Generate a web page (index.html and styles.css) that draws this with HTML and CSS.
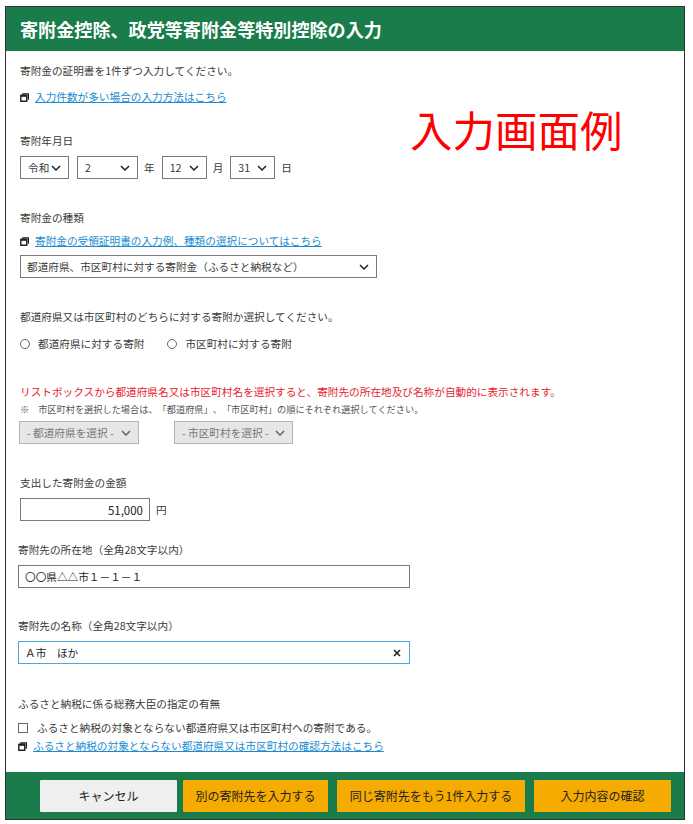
FILE: index.html
```html
<!DOCTYPE html>
<html lang="ja">
<head>
  <meta charset="UTF-8">
  <title>寄附金控除、政党等寄附金等特別控除の入力</title>
  <link rel="stylesheet" href="styles.css">
</head>
<body>
  <div class="frame">
    <header class="title-bar">
      <h1>寄附金控除、政党等寄附金等特別控除の入力</h1>
    </header>

    <main class="content">
      <p class="example-note">入力画面例</p>

      <p class="intro">寄附金の証明書を1件ずつ入力してください。</p>
      <p class="link-row link-first">
        <svg class="win-icon" viewBox="0 0 10 10"><path d="M2.5 1h7v6.5M.9 2.8h6.6v6.3H.9z" fill="none" stroke="#222" stroke-width="1.6"/><path d="M.9 3h6.6" stroke="#222" stroke-width="2.4"/></svg>
        <a href="#">入力件数が多い場合の入力方法はこちら</a>
      </p>

      <!-- 寄附年月日 -->
      <section class="date-block">
        <label class="field-label">寄附年月日</label>
        <div class="date-row">
          <span class="select w-era">令和<svg class="chev" viewBox="0 0 10 6"><path d="M1 1l4 4 4-4"/></svg></span>
          <span class="select w-year">2<svg class="chev" viewBox="0 0 10 6"><path d="M1 1l4 4 4-4"/></svg></span>
          <span class="unit">年</span>
          <span class="select w-day">12<svg class="chev" viewBox="0 0 10 6"><path d="M1 1l4 4 4-4"/></svg></span>
          <span class="unit">月</span>
          <span class="select w-day">31<svg class="chev" viewBox="0 0 10 6"><path d="M1 1l4 4 4-4"/></svg></span>
          <span class="unit">日</span>
        </div>
      </section>

      <!-- 寄附金の種類 -->
      <section class="kind-block">
        <label class="field-label">寄附金の種類</label>
        <p class="link-row link-kind">
          <svg class="win-icon" viewBox="0 0 10 10"><path d="M2.5 1h7v6.5M.9 2.8h6.6v6.3H.9z" fill="none" stroke="#222" stroke-width="1.6"/><path d="M.9 3h6.6" stroke="#222" stroke-width="2.4"/></svg>
          <a href="#">寄附金の受領証明書の入力例、種類の選択についてはこちら</a>
        </p>
        <span class="select w-kind">都道府県、市区町村に対する寄附金（ふるさと納税など）<svg class="chev" viewBox="0 0 10 6"><path d="M1 1l4 4 4-4"/></svg></span>
      </section>

      <section class="target-block">
        <p class="field-label">都道府県又は市区町村のどちらに対する寄附か選択してください。</p>
        <div class="radio-row">
          <span class="radio"></span><span class="radio-text">都道府県に対する寄附</span>
          <span class="radio"></span><span>市区町村に対する寄附</span>
        </div>
      </section>

      <section class="list-block">
        <p class="warn">リストボックスから都道府県名又は市区町村名を選択すると、寄附先の所在地及び名称が自動的に表示されます。</p>
        <p class="small-note"><span class="kome">※</span>市区町村を選択した場合は、「都道府県」、「市区町村」の順にそれぞれ選択してください。</p>
        <div class="disabled-row">
          <span class="select is-disabled w-pref">- 都道府県を選択 -<svg class="chev" viewBox="0 0 10 6"><path d="M1 1l4 4 4-4"/></svg></span>
          <span class="select is-disabled w-city">- 市区町村を選択 -<svg class="chev" viewBox="0 0 10 6"><path d="M1 1l4 4 4-4"/></svg></span>
        </div>
      </section>

      <section class="amount-block">
        <label class="field-label">支出した寄附金の金額</label>
        <div class="amount-row">
          <span class="text-input amount">51,000</span>
          <span class="unit">円</span>
        </div>
      </section>

      <section class="address-block">
        <label class="field-label">寄附先の所在地（全角28文字以内）</label>
        <span class="text-input wide">〇〇県△△市１－１－１</span>
      </section>

      <section class="name-block">
        <label class="field-label">寄附先の名称（全角28文字以内）</label>
        <span class="text-input wide is-focus">Ａ市　ほか<svg class="clear" viewBox="0 0 8 8"><path d="M1 1l6 6M7 1L1 7"/></svg></span>
      </section>

      <section class="furusato-block">
        <p class="field-label">ふるさと納税に係る総務大臣の指定の有無</p>
        <div class="check-row"><span class="checkbox"></span>ふるさと納税の対象とならない都道府県又は市区町村への寄附である。</div>
        <p class="link-row link-last">
          <svg class="win-icon narrow" viewBox="0 0 10 10"><path d="M2.5 1h7v6.5M.9 2.8h6.6v6.3H.9z" fill="none" stroke="#222" stroke-width="1.6"/><path d="M.9 3h6.6" stroke="#222" stroke-width="2.4"/></svg>
          <a href="#">ふるさと納税の対象とならない都道府県又は市区町村の確認方法はこちら</a>
        </p>
      </section>
    </main>

    <footer class="button-bar">
      <button class="btn btn-cancel">キャンセル</button>
      <button class="btn btn-other">別の寄附先を入力する</button>
      <button class="btn btn-same">同じ寄附先をもう1件入力する</button>
      <button class="btn btn-confirm">入力内容の確認</button>
    </footer>
  </div>
</body>
</html>
```

FILE: styles.css
```css
/* Base styling */
body {
  margin: 0;
  font-family: "Noto Sans CJK JP", "Noto Sans", sans-serif;
  font-size: 10.65px;
  text-spacing-trim: space-all;
  color: #3a3a3a;
  background: #fff;
}
p {
  margin: 0;
}
.frame {
  margin: 6px 0 0 5px;
  width: 680px;
  height: 814px;
  box-sizing: border-box;
  border: 1px solid #333;
  display: flex;
  flex-direction: column;
}
.title-bar {
  background: #1a7c4a;
  height: 44px;
  flex: none;
  display: flex;
  align-items: center;
  padding-left: 14px;
}
.title-bar h1 {
  margin: 0;
  color: #fff;
  font-size: 18.1px;
  font-weight: 700;
  line-height: 1;
}

/* Main form */
.content {
  position: relative;
  flex: 1;
  padding: 12px 0 0 14px;
}
.example-note {
  position: absolute;
  left: 404px;
  top: 57px;
  color: #f00;
  font-size: 42.5px;
  line-height: 1;
  white-space: nowrap;
}
.field-label {
  display: block;
  line-height: 16px;
}
.intro {
  line-height: 16px;
}
.link-row {
  display: flex;
  align-items: center;
  line-height: 16px;
}
.link-row a {
  color: #1a8ccf;
}
.win-icon {
  width: 9px;
  height: 9px;
  margin-right: 6px;
  flex: none;
}
.win-icon.narrow {
  margin-right: 6px;
}
.link-first {
  margin-top: 10px;
}

/* Select boxes */
.select {
  box-sizing: border-box;
  height: 23px;
  display: inline-flex;
  align-items: center;
  justify-content: space-between;
  padding: 0 7px;
  border: 1px solid #7a7a7a;
  background: #fff;
  white-space: nowrap;
}
.chev {
  width: 10px;
  height: 6px;
  fill: none;
  stroke: #222;
  stroke-width: 1.5;
  flex: none;
}
.w-era { width: 49px; }
.w-year { width: 61px; }
.w-day { width: 45px; }
.w-kind { width: 357px; padding-left: 6px; }
.w-pref { width: 120px; }
.w-city { width: 119px; }
.is-disabled {
  background: #e6e6e6;
  border-color: #b5b5b5;
  color: #777;
}
.is-disabled .chev {
  stroke: #666;
}

.date-block {
  margin-top: 28px;
}
.date-row {
  display: flex;
  align-items: center;
  margin-top: 7px;
}
.date-row .w-year {
  margin-left: 8px;
}
.unit {
  margin: 0 7px 0 6px;
}
.kind-block {
  margin-top: 31px;
}
.link-kind {
  margin-top: 7px;
  margin-bottom: 6px;
}
.target-block {
  margin-top: 31px;
}
.radio-row {
  display: flex;
  align-items: center;
  margin-top: 11px;
  line-height: 16px;
}
.radio {
  box-sizing: border-box;
  width: 10px;
  height: 10px;
  border: 1px solid #666;
  border-radius: 50%;
  margin-right: 8px;
}
.radio-text {
  margin-right: 23px;
}
.list-block {
  margin-top: 32px;
}
.warn {
  color: #e8212b;
  line-height: 16px;
}
.small-note {
  font-size: 9.2px;
  line-height: 14px;
  margin-top: 2px;
  color: #555;
}
.kome {
  margin-right: 9px;
}
.disabled-row {
  display: flex;
  gap: 35px;
  margin-top: 5px;
  margin-left: -1px;
}
.amount-block {
  margin-top: 31px;
}
.amount-row {
  display: flex;
  align-items: center;
  margin-top: 7px;
}

/* Text inputs */
.text-input {
  box-sizing: border-box;
  height: 23px;
  display: flex;
  align-items: center;
  border: 1px solid #7a7a7a;
  background: #fff;
  padding: 0 6px;
  color: #222;
}
.amount {
  width: 130px;
  justify-content: flex-end;
  font-size: 11.5px;
}
.wide {
  width: 392px;
  margin-top: 7px;
}
.is-focus {
  border-color: #4aa8dc;
  justify-content: space-between;
}
.clear {
  width: 8px;
  height: 8px;
  fill: none;
  stroke: #222;
  stroke-width: 1.6;
  margin-right: 2px;
}
.address-block {
  margin-top: 21px;
  margin-left: -2px;
}
.name-block {
  margin-top: 30px;
  margin-left: -2px;
}
.furusato-block {
  margin-top: 32px;
  margin-left: -2px;
}
.check-row {
  display: flex;
  align-items: center;
  margin-top: 8px;
  line-height: 16px;
}
.checkbox {
  box-sizing: border-box;
  width: 10px;
  height: 10px;
  border: 1px solid #666;
  margin-right: 9px;
}
.link-last {
  margin-top: 2px;
}

/* Bottom button bar */
.button-bar {
  background: #1a7c4a;
  height: 47px;
  flex: none;
  display: flex;
  align-items: center;
  padding-left: 34px;
  gap: 6px;
}
.btn {
  box-sizing: border-box;
  height: 32px;
  border: none;
  border-radius: 1px;
  font-family: inherit;
  font-size: 12px;
  color: #222;
  padding: 0;
  background: #f5ab00;
}
.btn-cancel { width: 137px; background: #efefef; }
.btn-other { width: 145px; }
.btn-same { width: 188px; margin-left: 3px; }
.btn-confirm { width: 137px; margin-left: 3px; }
```
